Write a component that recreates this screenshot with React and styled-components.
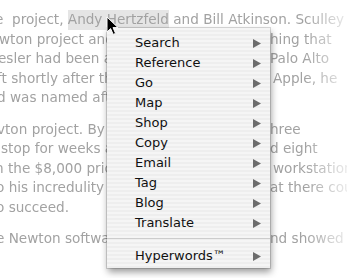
import React from "react";
import styled, { createGlobalStyle } from "styled-components";

const GlobalStyle = createGlobalStyle`
  html, body { margin: 0; padding: 0; background: #ffffff; }
`;

const Page = styled.div`
  position: relative;
  width: 347px;
  height: 278px;
  overflow: hidden;
  background: #ffffff;
`;

const TextLayer = styled.div`
  padding-top: 10px;
  font-family: "DejaVu Sans", "Liberation Sans", sans-serif;
  font-size: 13.6px;
  line-height: 19.5px;
  color: #a2a2a2;
  white-space: pre;
  -webkit-mask-image: linear-gradient(to right, #000 0, #000 305px, rgba(0,0,0,0.22) 347px);
  mask-image: linear-gradient(to right, #000 0, #000 305px, rgba(0,0,0,0.22) 347px);
`;

const Paragraph = styled.div`
  margin-bottom: 12px;
`;

const Line = styled.div`
  display: grid;
  grid-template-columns: ${(p) => (p.$full ? "1fr" : "270px 1fr")};
  height: 19.5px;
`;

const Segment = styled.div`
  overflow: hidden;
`;

const Words = styled.span`
  display: inline-block;
  margin-left: ${(p) => p.$shift || 0}px;
`;

const Mark = styled.span`
  background: #e5e5e5;
  padding: 2px 0 3px;
`;

const Menu = styled.div`
  position: absolute;
  left: 107px;
  top: 28px;
  width: 163px;
  box-sizing: border-box;
  padding: 5px 0 2px;
  background: repeating-linear-gradient(to bottom, #f5f5f5 0, #f5f5f5 2px, #eeeeee 2px, #eeeeee 4px);
  box-shadow: 0 0 0 1px rgba(0, 0, 0, 0.14), 1px 4px 7px rgba(0, 0, 0, 0.4);
  font-family: "DejaVu Sans", "Liberation Sans", sans-serif;
  font-size: 13px;
  color: #111111;
`;

const Item = styled.div`
  display: flex;
  align-items: center;
  justify-content: space-between;
  height: 20px;
  line-height: 20px;
  padding: 0 9px 0 28px;
`;

const Separator = styled.div`
  height: 1px;
  margin: 5px 0 7px;
  background: #cccccc;
`;

const Arrow = styled.svg`
  display: block;
  width: 8px;
  height: 9px;
`;

const Cursor = styled.svg`
  position: absolute;
  left: 106px;
  top: 16px;
  width: 13px;
  height: 20px;
`;

const SubArrow = () => (
  <Arrow viewBox="0 0 8 9">
    <polygon points="0,0 8,4.5 0,9" fill="#6c6c6c" />
  </Arrow>
);

const paragraphs = [
  [
    null,
    { l: "wton project and everything", ls: -1, r: "hing that" },
    { l: "esler had been at Apple", ls: -2, r: "Palo Alto" },
    { l: "ft shortly after that", ls: -3, r: "Apple, he", rs: 3 },
    { l: "d was named after", ls: -3 },
  ],
  [
    { l: "vton project. By then", ls: -3, r: "hree" },
    { l: "stop for weeks at a time", ls: 1, r: "d eight" },
    { l: "n the $8,000 price", ls: -5, r: "workstation", rs: 3 },
    { l: "o his incredulity and", ls: -4, r: "at there could" },
    { l: "o succeed.", ls: -4 },
  ],
  [{ l: "e Newton software", ls: -4, r: "nd showed him" }],
];

const items = [
  "Search",
  "Reference",
  "Go",
  "Map",
  "Shop",
  "Copy",
  "Email",
  "Tag",
  "Blog",
  "Translate",
];

export default function App() {
  return (
    <Page>
      <GlobalStyle />
      <TextLayer>
        {paragraphs.map((lines, pi) => (
          <Paragraph key={pi}>
            {lines.map((ln, li) =>
              ln === null ? (
                <Line key={li} $full>
                  <Segment>
                    <Words $shift={-5}>
                      {"e\u00a0 project, "}
                      <Mark>Andy Hertzfeld</Mark>
                      {" and Bill Atkinson. Sculley"}
                    </Words>
                  </Segment>
                </Line>
              ) : (
                <Line key={li}>
                  <Segment>
                    <Words $shift={ln.ls}>{ln.l}</Words>
                  </Segment>
                  <div>
                    {ln.r && <Words $shift={ln.rs || 0}>{ln.r}</Words>}
                  </div>
                </Line>
              )
            )}
          </Paragraph>
        ))}
      </TextLayer>

      <Menu>
        {items.map((it) => (
          <Item key={it}>
            <span>{it}</span>
            <SubArrow />
          </Item>
        ))}
        <Separator />
        <Item>
          <span>Hyperwords™</span>
          <SubArrow />
        </Item>
      </Menu>

      <Cursor viewBox="0 0 13 20">
        <path
          d="M1,1 L1,16 L4.6,12.6 L7.2,18.4 L9.6,17.4 L7,11.6 L12,11.6 Z"
          fill="#000"
          stroke="#fff"
          strokeWidth="1"
          strokeLinejoin="round"
        />
      </Cursor>
    </Page>
  );
}
